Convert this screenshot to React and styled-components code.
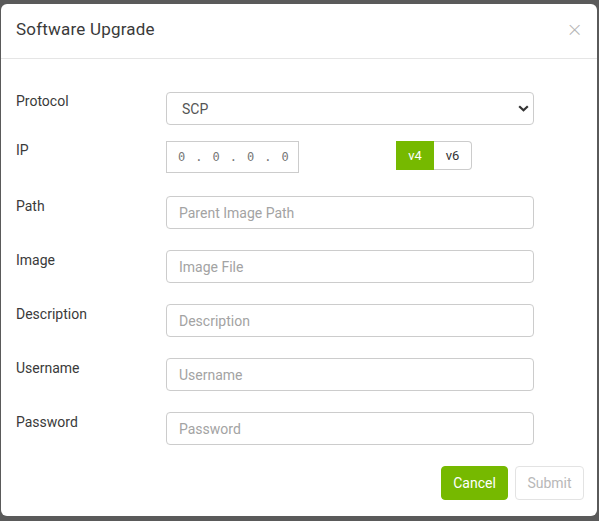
import React from "react";
import styled, { createGlobalStyle } from "styled-components";

const Global = createGlobalStyle`
  html, body { margin: 0; padding: 0; background: #5a5a5a; }
  body { font-family: Roboto, "Liberation Sans", sans-serif; }
  * { box-sizing: border-box; }
`;

const Backdrop = styled.div`
  width: 599px;
  height: 521px;
  padding: 4px 2px 5px 1px;
  background: #5a5a5a;
`;

const Modal = styled.div`
  width: 596px;
  height: 512px;
  background: #fff;
  border-radius: 6px;
  display: flex;
  flex-direction: column;
`;

const Header = styled.div`
  height: 57px;
  border-bottom: 1px solid #e5e5e5;
  display: flex;
  align-items: center;
  justify-content: space-between;
  padding: 0 14px 4px 15px;
`;

const Title = styled.h4`
  margin: 0;
  font-size: 17px;
  font-weight: 400;
  color: #3a3a3a;
  letter-spacing: 0.2px;
`;

const Close = styled.button`
  border: 0;
  background: none;
  padding: 0;
  color: #b5b5b5;
  font-size: 20px;
  line-height: 1;
  font-weight: 300;
  cursor: pointer;
  font-family: "DejaVu Sans", sans-serif;
`;

const Body = styled.div`
  padding: 33px 63px 0 15px;
  display: flex;
  flex-direction: column;
`;

const Row = styled.div`
  display: grid;
  grid-template-columns: 150px 1fr;
  align-items: start;
  margin-bottom: ${(p) => p.$mb}px;
`;

const Label = styled.label`
  font-size: 14px;
  color: #3a3a3a;
  padding-top: ${(p) => p.$pt}px;
  line-height: 16px;
`;

const SelectWrap = styled.div`
  position: relative;
`;

const Select = styled.select`
  appearance: none;
  width: 100%;
  height: 33px;
  border: 1px solid #ccc;
  border-radius: 4px;
  background: #fff;
  padding: 0 15px;
  font-size: 14px;
  color: #555;
  font-family: Roboto, "Liberation Sans", sans-serif;
  outline: none;
`;

const Chevron = styled.svg`
  position: absolute;
  right: 5px;
  top: 13px;
  pointer-events: none;
`;

const Input = styled.input`
  width: 100%;
  height: 33px;
  border: 1px solid #ccc;
  border-radius: 4px;
  padding: 0 12px;
  font-size: 14px;
  color: #555;
  font-family: Roboto, "Liberation Sans", sans-serif;
  outline: none;
  &::placeholder { color: #a3a3a3; }
`;

const IpLine = styled.div`
  display: flex;
  align-items: flex-start;
`;

const IpBox = styled.div`
  width: 133px;
  height: 32px;
  border: 1px solid #ccc;
  display: flex;
  align-items: center;
  padding-left: 11px;
  gap: 10px;
  font-family: "DejaVu Sans Mono", monospace;
  font-size: 12px;
  color: #777;
`;

const Octet = styled.span``;

const Toggle = styled.div`
  display: flex;
  margin-left: 97px;
`;

const ToggleBtn = styled.button`
  width: 38px;
  height: 29px;
  border: 1px solid ${(p) => (p.$active ? "#76b900" : "#ccc")};
  background: ${(p) => (p.$active ? "#76b900" : "#fff")};
  color: ${(p) => (p.$active ? "#fff" : "#333")};
  border-radius: ${(p) => (p.$active ? "0" : "0 4px 4px 0")};
  border-left-width: ${(p) => (p.$active ? "1px" : "0")};
  font-size: 13px;
  font-weight: 400;
  font-family: Roboto, "Liberation Sans", sans-serif;
  padding: 0;
`;

const Footer = styled.div`
  margin-top: auto;
  display: flex;
  justify-content: flex-end;
  gap: 7px;
  padding: 0 13px 16px 0;
`;

const Button = styled.button`
  height: 34px;
  width: ${(p) => (p.$primary ? "67px" : "69px")};
  padding: 0;
  border-radius: 4px;
  font-size: 14px;
  font-weight: 400;
  font-family: Roboto, "Liberation Sans", sans-serif;
  border: 1px solid ${(p) => (p.$primary ? "#76b900" : "#e3e3e3")};
  background: ${(p) => (p.$primary ? "#76b900" : "#fff")};
  color: ${(p) => (p.$primary ? "#fff" : "#b8b8b8")};
`;

const fields = [
  ["Path", "Parent Image Path"],
  ["Image", "Image File"],
  ["Description", "Description"],
  ["Username", "Username"],
  ["Password", "Password"],
];

export default function App() {
  return (
    <>
      <Global />
      <Backdrop>
        <Modal>
          <Header>
            <Title>Software Upgrade</Title>
            <Close>×</Close>
          </Header>
          <Body>
            <Row $mb={16}>
              <Label $pt={1}>Protocol</Label>
              <SelectWrap>
                <Select defaultValue="SCP">
                  <option>SCP</option>
                  <option>SFTP</option>
                  <option>HTTP</option>
                </Select>
                <Chevron width="11" height="7" viewBox="0 0 11 7">
                  <path d="M1.2 1.2 L5.5 5.3 L9.8 1.2" fill="none" stroke="#333" strokeWidth="2.2" />
                </Chevron>
              </SelectWrap>
            </Row>
            <Row $mb={23}>
              <Label $pt={1}>IP</Label>
              <IpLine>
                <IpBox>
                  <Octet>0</Octet>.<Octet>0</Octet>.<Octet>0</Octet>.<Octet>0</Octet>
                </IpBox>
                <Toggle>
                  <ToggleBtn $active>v4</ToggleBtn>
                  <ToggleBtn>v6</ToggleBtn>
                </Toggle>
              </IpLine>
            </Row>
            {fields.map(([l, p]) => (
              <Row key={l} $mb={21}>
                <Label $pt={2}>{l}</Label>
                <Input placeholder={p} type={l === "Password" ? "password" : "text"} />
              </Row>
            ))}
          </Body>
          <Footer>
            <Button $primary>Cancel</Button>
            <Button disabled>Submit</Button>
          </Footer>
        </Modal>
      </Backdrop>
    </>
  );
}
